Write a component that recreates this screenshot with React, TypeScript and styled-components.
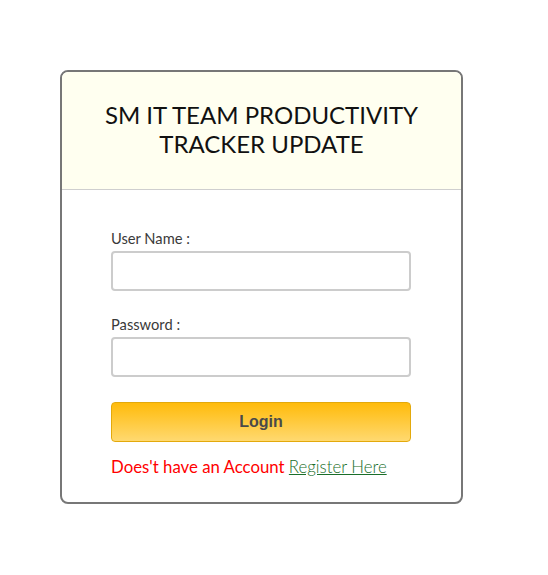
import React from "react";
import styled, { createGlobalStyle } from "styled-components";

const GlobalStyle = createGlobalStyle`
  html, body { margin: 0; padding: 0; background: #ffffff; }
  body { font-family: "Lato", "Open Sans", sans-serif; }
`;

const Page = styled.div`
  padding: 70px 0 0 60px;
`;

const Card = styled.div`
  box-sizing: border-box;
  width: 403px;
  border: 2px solid #777777;
  border-radius: 8px;
  overflow: hidden;
  background: #ffffff;
`;

const Header = styled.div`
  box-sizing: border-box;
  height: 118px;
  padding-bottom: 3px;
  background: #fffff0;
  border-bottom: 1px solid #cfcfcf;
  display: flex;
  align-items: center;
  justify-content: center;
`;

const Title = styled.h1`
  margin: 0;
  font-family: "Lato", sans-serif;
  font-weight: 400;
  font-size: 24px;
  line-height: 29px;
  color: #111111;
  text-align: center;
  text-transform: uppercase;
`;

const Body = styled.form`
  padding: 40px 49px 25px 49px;
  display: flex;
  flex-direction: column;
`;

const Field = styled.div<{ $gap: number }>`
  display: flex;
  flex-direction: column;
  gap: 4px;
  margin-bottom: ${(p) => p.$gap}px;
`;

const Label = styled.label`
  font-size: 14.7px;
  line-height: 17px;
  color: #3a3a3a;
`;

const Input = styled.input`
  box-sizing: border-box;
  width: 300px;
  height: 40px;
  border: 2px solid #cccccc;
  border-radius: 4px;
  padding: 0 10px;
  font-size: 14px;
  outline: none;
  background: #ffffff;
`;

const Button = styled.button`
  box-sizing: border-box;
  width: 300px;
  height: 40px;
  border: 1px solid #e3a90c;
  border-radius: 4px;
  background: linear-gradient(to bottom, #ffbb0b 0%, #ffd970 100%);
  font-family: "Liberation Sans", Arial, sans-serif;
  font-weight: 700;
  font-size: 16px;
  color: #4a4a4a;
  cursor: pointer;
  margin-bottom: 15px;
`;

const Footer = styled.p`
  margin: 0;
  font-size: 16.8px;
  line-height: 20px;
  color: #ff0000;
`;

const RegisterLink = styled.a`
  color: #1a6e2a;
  font-weight: 300;
  text-decoration: underline;
`;

export default function App() {
  return (
    <>
      <GlobalStyle />
      <Page>
        <Card>
          <Header>
            <Title>
              SM IT TEAM PRODUCTIVITY
              <br />
              TRACKER UPDATE
            </Title>
          </Header>
          <Body onSubmit={(e) => e.preventDefault()}>
            <Field $gap={25}>
              <Label htmlFor="username">User Name :</Label>
              <Input id="username" type="text" />
            </Field>
            <Field $gap={25}>
              <Label htmlFor="password">Password :</Label>
              <Input id="password" type="password" />
            </Field>
            <Button type="submit">Login</Button>
            <Footer>
              Does't have an Account <RegisterLink href="#">Register Here</RegisterLink>
            </Footer>
          </Body>
        </Card>
      </Page>
    </>
  );
}
